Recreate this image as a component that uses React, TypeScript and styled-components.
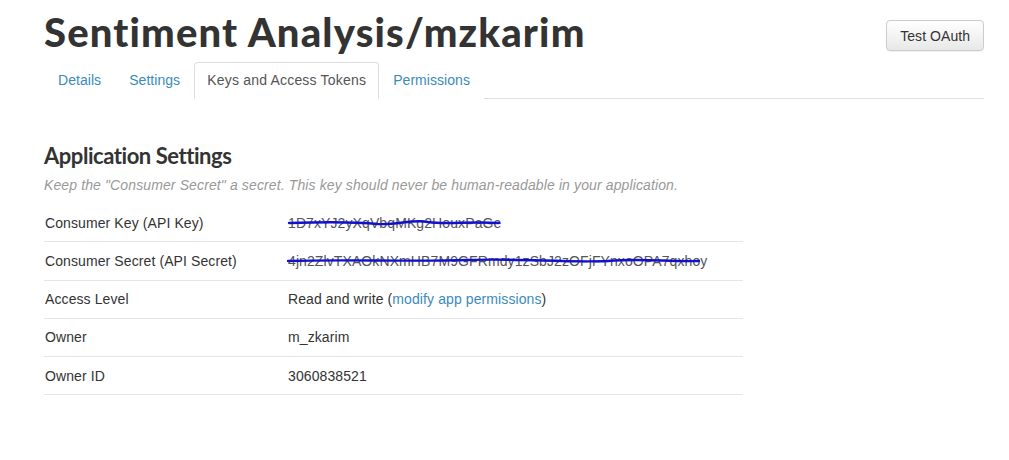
import React from "react";
import styled, { createGlobalStyle } from "styled-components";

const Global = createGlobalStyle`
  html, body { margin: 0; padding: 0; background: #fff; }
  body { font-family: "Liberation Sans", Arial, sans-serif; color: #333; font-size: 14px; }
`;

const Page = styled.div`
  padding: 8px 25px 0 44px;
`;

const Header = styled.div`
  display: flex;
  justify-content: space-between;
  align-items: flex-start;
`;

const Title = styled.h1`
  margin: 0;
  font-family: "Lato", sans-serif;
  font-weight: 900;
  font-size: 40px;
  line-height: 48px;
  color: #333;
  letter-spacing: 1.15px;
`;

const Button = styled.button`
  margin-top: 12px;
  height: 31px;
  padding: 0 13px;
  font-family: "Liberation Sans", Arial, sans-serif;
  font-size: 14px;
  letter-spacing: 0.05px;
  color: #333;
  background: linear-gradient(#fff, #e8e8e8);
  border: 1px solid #ccc;
  border-radius: 4px;
  box-shadow: 0 1px 1px rgba(0,0,0,0.06);
`;

const Tabs = styled.ul`
  list-style: none;
  margin: 6px 0 0;
  padding: 0;
  display: flex;
  border-bottom: 1px solid #ddd;
`;

const Tab = styled.li<{ $active?: boolean }>`
  margin-bottom: -1px;
  padding: 9px ${(p) => (p.$active ? "12px" : "13px")} 10px;
  line-height: 16px;
  border: 1px solid ${(p) => (p.$active ? "#ddd" : "transparent")};
  border-bottom-color: ${(p) => (p.$active ? "#fff" : "transparent")};
  border-radius: 4px 4px 0 0;
  background: #fff;
  color: ${(p) => (p.$active ? "#555" : "#3a8bbb")};
  font-size: 14px;
  letter-spacing: ${(p) => (p.$active ? "0.2px" : "0.05px")};
`;

const Section = styled.section`
  margin-top: 44px;
  width: 699px;
`;

const SectionTitle = styled.h2`
  margin: 0;
  font-family: "Lato", sans-serif;
  font-weight: 700;
  font-size: 22px;
  line-height: 26px;
  color: #333;
  letter-spacing: -0.45px;
`;

const Hint = styled.p`
  margin: 7px 0 0;
  font-style: italic;
  font-size: 14px;
  letter-spacing: 0.12px;
  color: #999;
  line-height: 18px;
  white-space: nowrap;
`;

const Table = styled.div`
  margin-top: 10px;
  display: flex;
  flex-direction: column;
`;

const Row = styled.div`
  display: grid;
  grid-template-columns: 244px 1fr;
  height: 37.25px;
  align-items: center;
  border-bottom: 1px solid #e6e6e6;
  letter-spacing: 0.1px;
`;

const Label = styled.div`
  padding-left: 1px;
  font-size: 14px;
  color: #333;
`;

const Value = styled.div`
  position: relative;
  font-size: 14px;
  color: #333;
`;

const Masked = styled.span`
  position: relative;
  color: #555;
`;

const Scribble = styled.svg`
  position: absolute;
  left: 0;
  top: -1px;
  overflow: visible;
  pointer-events: none;
`;

const Link = styled.a`
  color: #3a8bbb;
  text-decoration: none;
`;

export default function App() {
  return (
    <>
      <Global />
      <Page>
        <Header>
          <Title>Sentiment Analysis/mzkarim</Title>
          <Button>Test OAuth</Button>
        </Header>
        <Tabs>
          <Tab>Details</Tab>
          <Tab>Settings</Tab>
          <Tab $active>Keys and Access Tokens</Tab>
          <Tab>Permissions</Tab>
        </Tabs>
        <Section>
          <SectionTitle>Application Settings</SectionTitle>
          <Hint>Keep the "Consumer Secret" a secret. This key should never be human-readable in your application.</Hint>
          <Table>
            <Row>
              <Label>Consumer Key (API Key)</Label>
              <Value>
                <Masked>
                  1D7xYJ2yXqVbqMKg2HouxPaGe
                  <Scribble width="214" height="18" viewBox="0 0 214 18">
                    <path
                      d="M1 9 C 30 8, 60 7, 90 10 C 110 11, 125 5, 140 8 C 160 11, 180 7, 211 9"
                      fill="none"
                      stroke="#1010d0"
                      strokeWidth="2.4"
                      strokeLinecap="round"
                    />
                  </Scribble>
                </Masked>
              </Value>
            </Row>
            <Row>
              <Label>Consumer Secret (API Secret)</Label>
              <Value>
                <Masked>
                  4jn2ZlvTXAOkNXmHB7M9GFRmdy1zSbJ2zOFjFYnxoOPA7qxhoy
                  <Scribble width="412" height="18" viewBox="0 0 412 18">
                    <path
                      d="M0 9 C 60 7, 120 10, 180 8 C 230 6, 280 11, 320 9 C 355 6, 380 10, 411 9"
                      fill="none"
                      stroke="#1010d0"
                      strokeWidth="2.4"
                      strokeLinecap="round"
                    />
                  </Scribble>
                </Masked>
              </Value>
            </Row>
            <Row>
              <Label>Access Level</Label>
              <Value>
                Read and write (<Link href="#">modify app permissions</Link>)
              </Value>
            </Row>
            <Row>
              <Label>Owner</Label>
              <Value>m_zkarim</Value>
            </Row>
            <Row>
              <Label>Owner ID</Label>
              <Value>3060838521</Value>
            </Row>
          </Table>
        </Section>
      </Page>
    </>
  );
}
